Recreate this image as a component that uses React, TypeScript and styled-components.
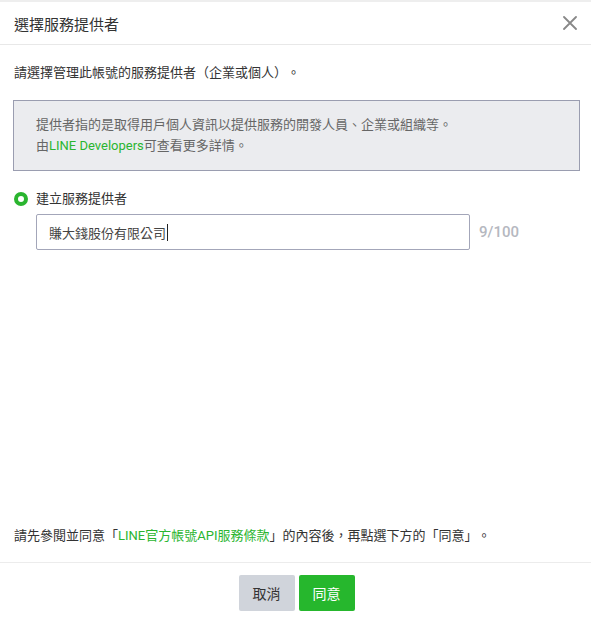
import React from "react";
import styled, { createGlobalStyle } from "styled-components";

const Global = createGlobalStyle`
  html, body { margin: 0; padding: 0; background: #fff; }
  body {
    font-family: Roboto, "Noto Sans CJK TC", "Noto Sans", sans-serif;
    color: #333;
    text-spacing-trim: space-all;
  }
  * { box-sizing: border-box; }
`;

const Dialog = styled.div`
  width: 591px;
  height: 623px;
  display: flex;
  flex-direction: column;
  border-top: 2px solid #eeeeee;
`;

const Header = styled.div`
  height: 43px;
  display: flex;
  align-items: center;
  justify-content: space-between;
  padding: 0 12px 0 14px;
  border-bottom: 1px solid #e8e8e8;
`;

const Title = styled.h1`
  margin: 0;
  font-size: 15px;
  font-weight: 400;
  color: #333;
`;

const CloseBtn = styled.button`
  border: none;
  background: none;
  padding: 0;
  width: 18px;
  height: 18px;
  display: flex;
  align-items: center;
  justify-content: center;
  cursor: pointer;
`;

const Body = styled.div`
  flex: 1;
  padding: 19px 11px 0 14px;
  display: flex;
  flex-direction: column;
`;

const Text = styled.p`
  margin: 0;
  font-size: 13px;
  line-height: 18px;
  color: #333;
`;

const InfoBox = styled.div`
  margin-top: 18px;
  margin-left: -1px;
  background: #ebecef;
  border: 1px solid #9a9db0;
  padding: 13px 22px 14px;
  font-size: 13px;
  line-height: 21px;
  color: #666;
`;

const Link = styled.a`
  color: #2ab52f;
  text-decoration: none;
`;

const RadioRow = styled.label`
  margin-top: 19px;
  display: flex;
  align-items: center;
  gap: 8px;
  font-size: 13px;
  color: #333;
  line-height: 18px;
`;

const RadioDot = styled.span`
  width: 14px;
  height: 14px;
  border-radius: 50%;
  border: 4px solid #2ab52f;
  background: #fff;
  flex-shrink: 0;
`;

const InputRow = styled.div`
  margin-top: 6px;
  margin-left: 22px;
  display: flex;
  align-items: center;
  gap: 9px;
`;

const Input = styled.div`
  width: 434px;
  height: 36px;
  border: 1px solid #a3a6b9;
  border-radius: 2px;
  padding: 0 12px;
  display: flex;
  align-items: center;
  font-size: 13px;
  color: #444;
`;

const Caret = styled.span`
  display: inline-block;
  width: 1px;
  height: 17px;
  background: #222;
  margin-left: 1px;
`;

const Counter = styled.span`
  font-size: 15px;
  font-weight: 500;
  color: #b5b8c0;
`;

const Note = styled.p`
  margin: 0;
  padding: 0 14px 17px;
  font-size: 13px;
  line-height: 18px;
  color: #333;
`;

const Footer = styled.div`
  border-top: 1px solid #ececec;
  padding: 12px 0 12px 2px;
  display: flex;
  justify-content: center;
  gap: 4px;
`;

const Button = styled.button<{ $primary?: boolean }>`
  width: 56px;
  height: 36px;
  border: none;
  border-radius: 2px;
  font-family: inherit;
  font-size: 14px;
  background: ${(p) => (p.$primary ? "#26b72d" : "#d0d4db")};
  color: ${(p) => (p.$primary ? "#fff" : "#333")};
  cursor: pointer;
`;

export default function App() {
  return (
    <>
      <Global />
      <Dialog>
        <Header>
          <Title>選擇服務提供者</Title>
          <CloseBtn aria-label="close">
            <svg width="14" height="14" viewBox="0 0 14 14">
              <path d="M1 1L13 13M13 1L1 13" stroke="#888" strokeWidth="1.8" strokeLinecap="round" />
            </svg>
          </CloseBtn>
        </Header>
        <Body>
          <Text>請選擇管理此帳號的服務提供者（企業或個人）。</Text>
          <InfoBox>
            提供者指的是取得用戶個人資訊以提供服務的開發人員、企業或組織等。
            <br />由<Link>LINE Developers</Link>可查看更多詳情。
          </InfoBox>
          <RadioRow>
            <RadioDot />
            建立服務提供者
          </RadioRow>
          <InputRow>
            <Input>
              賺大錢股份有限公司
              <Caret />
            </Input>
            <Counter>9/100</Counter>
          </InputRow>
        </Body>
        <Note>
          請先參閱並同意「<Link>LINE官方帳號API服務條款</Link>」的內容後，再點選下方的「同意」。
        </Note>
        <Footer>
          <Button>取消</Button>
          <Button $primary>同意</Button>
        </Footer>
      </Dialog>
    </>
  );
}
